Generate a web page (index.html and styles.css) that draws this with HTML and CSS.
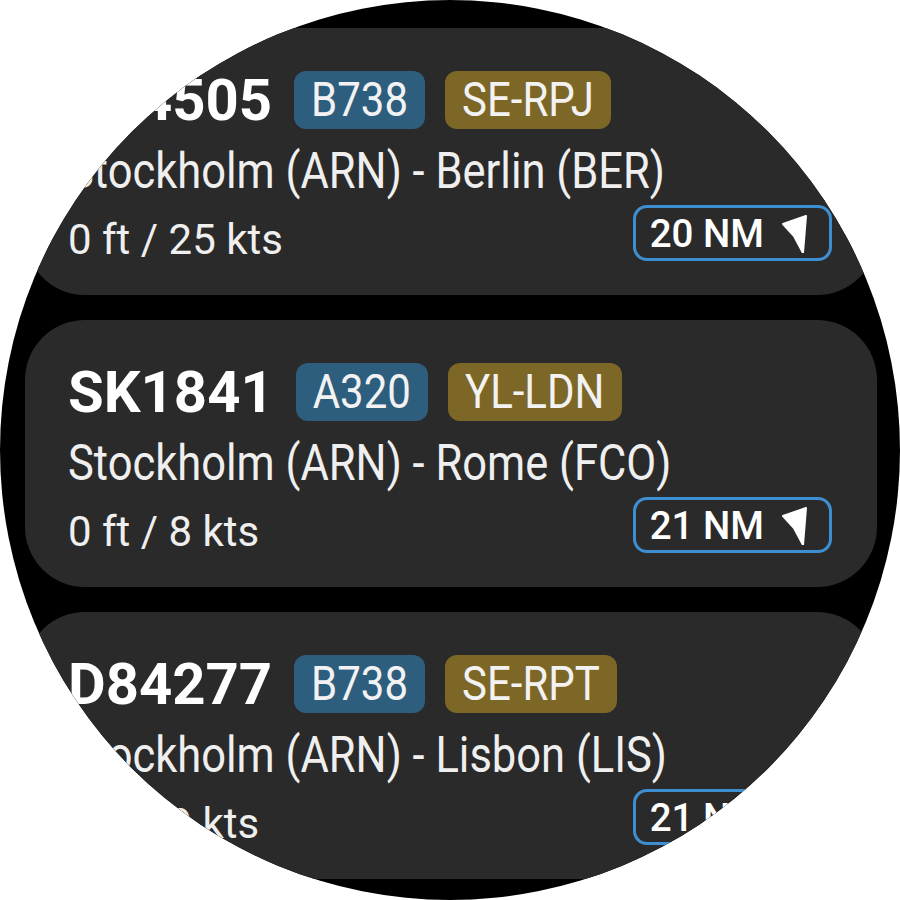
FILE: index.html
```html
<!DOCTYPE html>
<html lang="en">
<head>
    <meta charset="UTF-8">
    <meta name="viewport" content="width=device-width, initial-scale=1.0">
    <title>Nearby flights</title>
    <link rel="stylesheet" href="styles.css">
</head>
<body>
    <div class="watch">
        <div class="list">
            <div class="card">
                <div class="head">
                    <span class="flight">D84505</span>
                    <span class="tag type"><span class="tall">B738</span></span>
                    <span class="tag reg"><span class="tall">SE-RPJ</span></span>
                </div>
                <div class="route"><span class="tall">Stockholm (ARN) - Berlin (BER)</span></div>
                <div class="foot">
                    <span class="speed">0 ft / 25 kts</span>
                    <span class="dist">20 NM
                        <svg class="arrow" viewBox="0 0 40 40"><polygon points="31,3 8,11 19,23 28,40"/></svg>
                    </span>
                </div>
            </div>

            <div class="card">
                <div class="head">
                    <span class="flight">SK1841</span>
                    <span class="tag type"><span class="tall">A320</span></span>
                    <span class="tag reg"><span class="tall">YL-LDN</span></span>
                </div>
                <div class="route"><span class="tall">Stockholm (ARN) - Rome (FCO)</span></div>
                <div class="foot">
                    <span class="speed">0 ft / 8 kts</span>
                    <span class="dist">21 NM
                        <svg class="arrow" viewBox="0 0 40 40"><polygon points="31,3 8,11 19,23 28,40"/></svg>
                    </span>
                </div>
            </div>

            <div class="card">
                <div class="head">
                    <span class="flight">D84277</span>
                    <span class="tag type"><span class="tall">B738</span></span>
                    <span class="tag reg"><span class="tall">SE-RPT</span></span>
                </div>
                <div class="route"><span class="tall">Stockholm (ARN) - Lisbon (LIS)</span></div>
                <div class="foot">
                    <span class="speed">0 ft / 9 kts</span>
                    <span class="dist">21 NM
                        <svg class="arrow" viewBox="0 0 40 40"><polygon points="31,3 8,11 19,23 28,40"/></svg>
                    </span>
                </div>
            </div>
        </div>
    </div>
</body>
</html>
```

FILE: styles.css
```css
body {
    margin: 0;
    padding: 0;
    background: #ffffff;
    font-family: Roboto, "Noto Sans", sans-serif;
}

.watch {
    width: 900px;
    height: 900px;
    border-radius: 50%;
    background: #000000;
    overflow: hidden;
}

.list {
    padding: 28px 0 0 25px;
    width: 852px;
    display: flex;
    flex-direction: column;
    gap: 25px;
}

.card {
    flex-shrink: 0;
    height: 267px;
    box-sizing: border-box;
    padding: 43px 45px 0 43px;
    background: #2a2a2a;
    border-radius: 60px;
    color: #ffffff;
}

.head {
    display: flex;
    align-items: center;
    height: 58px;
    gap: 20px;
}

.flight {
    font-size: 58px;
    font-weight: 700;
    line-height: 58px;
    margin-right: 2px;
}

.tag {
    height: 58px;
    line-height: 58px;
    padding: 0 17px;
    border-radius: 12px;
    font-size: 42px;
    color: #f2f2f2;
}

.type {
    background: #2d5e7e;
}

.reg {
    background: #7d6727;
}

/* route and tag text is drawn narrow and tall on the watch */
.tall {
    display: inline-block;
    transform: scaleY(1.16);
}

.route {
    margin-top: 14px;
    height: 58px;
    line-height: 58px;
    font-size: 43.5px;
    color: #efefef;
    white-space: nowrap;
}

.foot {
    margin-top: 4px;
    display: flex;
    justify-content: space-between;
    align-items: flex-end;
}

.speed {
    font-size: 42px;
    line-height: 42px;
    color: #efefef;
    white-space: nowrap;
}

.dist {
    height: 56px;
    box-sizing: border-box;
    display: flex;
    align-items: center;
    gap: 11px;
    padding: 0 14px 0 14px;
    border: 3px solid #3d8fd1;
    border-radius: 14px;
    font-size: 38.5px;
    font-weight: 500;
    white-space: nowrap;
}

.arrow {
    width: 40px;
    height: 40px;
    fill: #ffffff;
    stroke: #ffffff;
    stroke-width: 2;
    stroke-linejoin: round;
}
```
